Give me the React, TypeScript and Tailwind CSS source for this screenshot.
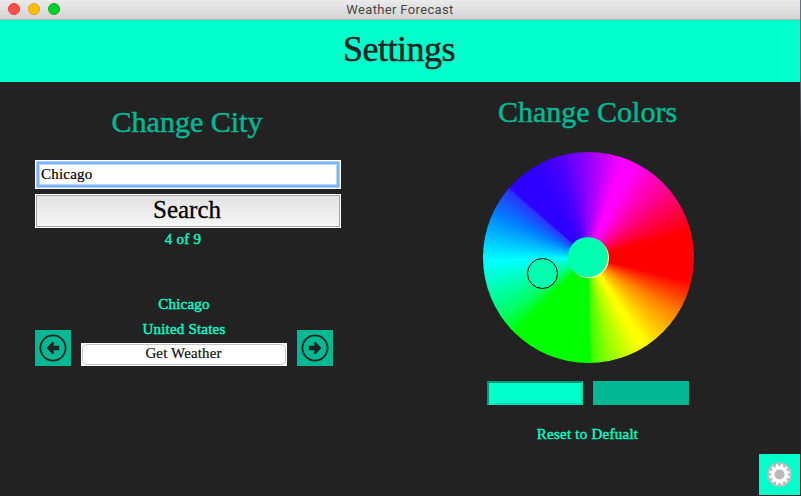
const serif = 'font-["Liberation_Serif","Times_New_Roman",serif]';

function TitleBar() {
  return (
    <div className="relative flex h-5 items-center justify-center border-b border-[#b1b1b1] bg-linear-to-b from-[#ebebeb] to-[#d3d3d3]">
      <div className="absolute top-[3px] left-2 flex gap-2">
        <span className="size-3 rounded-full border border-[#e8403a] bg-[#ff4e49]" />
        <span className="size-3 rounded-full border border-[#e0a10e] bg-[#ffbf00]" />
        <span className="size-3 rounded-full border border-[#0cae24] bg-[#00d02c]" />
      </div>
      <span className='font-["Roboto",sans-serif] text-[13px] leading-[19px] tracking-[0.36px] text-[#464646]'>
        Weather Forecast
      </span>
    </div>
  );
}

function ArrowButton({ flip = false }: { flip?: boolean }) {
  return (
    <button className="size-9 shrink-0 bg-[#00b894]" aria-label={flip ? "Next" : "Previous"}>
      <svg viewBox="0 0 36 36" className={flip ? "size-9 -scale-x-100" : "size-9"}>
        <circle cx="18" cy="18" r="12.6" fill="none" stroke="#222222" strokeWidth="1.8" />
        <path d="M11.6 18 L17.4 12 Q18.8 11.6 19 13 L18.4 15.8 H24.2 V20.2 H18.4 L19 23 Q18.8 24.4 17.4 24 Z" fill="#222222" />
      </svg>
    </button>
  );
}

function CityPanel() {
  return (
    <section className="flex w-[400px] flex-col pl-[35px]">
      <h2 className="mt-5 h-10 w-[304px] text-center text-[30px] leading-10 text-[#00b894] [-webkit-text-stroke:0.5px_#00b894]">
        Change City
      </h2>
      <div className="mt-[18px] h-[29px] w-[306px] border border-white bg-[#a9ceff] p-px">
        <div className="h-full border-2 border-[#7fb4f2] bg-[#b5d5fc] p-px">
          <div className="flex h-full items-center bg-white pb-0.5 pl-px text-[15px] leading-5 tracking-[0.2px] text-black [-webkit-text-stroke:0.2px_#000000]">
            Chicago
          </div>
        </div>
      </div>
      <button className="mt-[5px] h-[34px] w-[306px] border border-white bg-white text-[25px] text-black">
        <span className="block h-8 border border-[#a6a6a6] bg-linear-to-b from-[#e2e2e2] to-[#f6f6f6] pr-0.5 leading-[27px] [-webkit-text-stroke:0.3px_#000000]">
          Search
        </span>
      </button>
      <div className="mt-px h-5 w-[296px] text-center text-[15px] leading-5 tracking-[0.25px] text-[#00ffcb] [-webkit-text-stroke:0.4px_#00ffcb]">
        4 of 9
      </div>
      <div className="mt-11 flex w-[298px] items-end gap-2.5">
        <ArrowButton />
        <div className="w-[206px] text-center text-[15px] tracking-[0.2px] text-[#00ffcb]">
          <div className="h-[25px] leading-[22px] [-webkit-text-stroke:0.4px_#00ffcb]">Chicago</div>
          <div className="h-[25px] leading-[22px] [-webkit-text-stroke:0.4px_#00ffcb]">United States</div>
          <button className="block h-[23px] w-full bg-white p-px tracking-[0.13px] text-[#111111]">
            <span className="block h-[21px] rounded-[5px] border border-[#c4c4c4] pr-px leading-4 [-webkit-text-stroke:0.2px_#111111]">
              Get Weather
            </span>
          </button>
        </div>
        <ArrowButton flip />
      </div>
    </section>
  );
}

function ColorWheel() {
  return (
    <div className="relative size-[211px] rounded-full bg-[conic-gradient(#9400ff_0deg,#ff00ff_20deg,#ff00ff_26deg,#ff0080_52deg,#ff0000_76deg,#ff0000_103deg,#ff8000_122deg,#ffff00_147deg,#ffff00_150deg,#a0ff00_166deg,#40ff00_178deg,#00ff00_179deg,#00ff00_224deg,#00ff60_235deg,#00ffff_268deg,#0080ff_295deg,#2a35ff_310deg,#2c00ff_312deg,#3000ff_330deg,#4a00ff_343deg,#9400ff_360deg)]">
      <div className="absolute top-[86px] left-[86px] size-10 rounded-full bg-[#fffbb8]" />
      <div className="absolute top-[85px] left-[85px] size-10 rounded-full bg-[#00ffae]" />
      <div className="absolute top-[106px] left-11 size-[31px] rounded-full border border-black bg-[#00ffae]" />
    </div>
  );
}

function ColorPanel() {
  return (
    <section className="flex w-[400px] flex-col items-center pr-[25px]">
      <h2 className="mt-2.5 h-10 text-[30px] leading-10 text-[#00b894] [-webkit-text-stroke:0.5px_#00b894]">
        Change Colors
      </h2>
      <div className="mt-5 ml-0.5">
        <ColorWheel />
      </div>
      <div className="mt-[18px] ml-px flex gap-2.5">
        <div className="h-6 w-24 border-2 border-t-[#009978] border-r-[#00dfb2] border-b-[#00dfb2] border-l-[#009978] bg-[#00ffcb]" />
        <div className="h-6 w-24 bg-[#00b894]" />
      </div>
      <button className="mt-[19px] h-5 text-[15px] leading-5 tracking-[0.25px] text-[#00ffcb] [-webkit-text-stroke:0.4px_#00ffcb]">
        Reset to Defualt
      </button>
    </section>
  );
}

function GearButton() {
  const teeth = Array.from({ length: 12 }, (_, i) => i * 30);
  return (
    <button className="absolute right-0 bottom-0 size-[41px] bg-[#00ffcb]" aria-label="Settings">
      <svg viewBox="0 0 41 41" className="size-[41px]">
        <circle cx="20.5" cy="20.5" r="12.3" fill="#bdbdbd" />
        <circle cx="20.5" cy="20.5" r="8.4" fill="#ffffff" />
        {teeth.map((angle) => (
          <path key={angle} d="M19.2 12.5 L19.6 9.9 H21.4 L21.8 12.5 Z" fill="#ffffff" transform={`rotate(${angle + 15} 20.5 20.5)`} />
        ))}
        <circle cx="20.5" cy="20.5" r="5" fill="#b8b8b8" />
      </svg>
    </button>
  );
}

export default function App() {
  return (
    <div className={`h-[496px] w-[801px] overflow-hidden bg-linear-to-b from-[#617087] from-15% to-[#25242a] to-30% ${serif}`}>
      <main className="relative h-[495px] w-[800px] bg-[#222222]">
        <TitleBar />
        <header className="h-[62px] bg-[#00ffcb] text-center">
          <h1 className="pr-0.5 text-[36px] leading-[58px] tracking-[-0.5px] text-[#222222] [-webkit-text-stroke:0.5px_#222222]">
            Settings
          </h1>
        </header>
        <div className="flex">
          <CityPanel />
          <ColorPanel />
        </div>
        <GearButton />
      </main>
    </div>
  );
}
